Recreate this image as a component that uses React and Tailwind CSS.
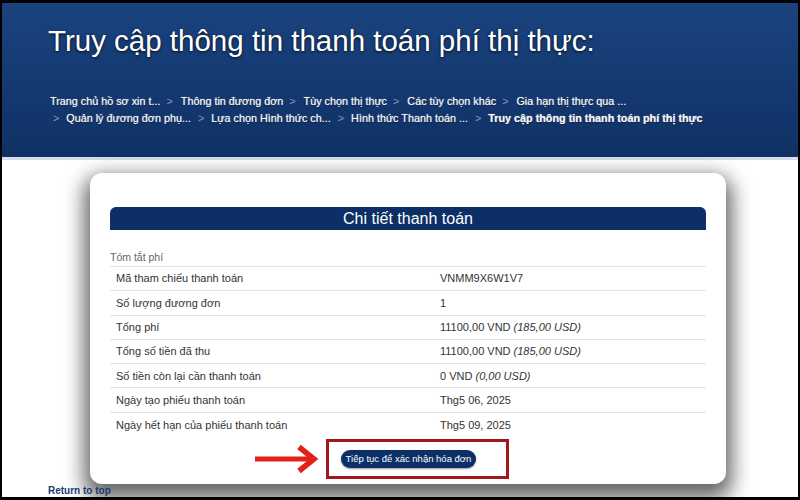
export default function App() {
  const crumbs1 = [
    "Trang chủ hồ sơ xin t...",
    "Thông tin đương đơn",
    "Tùy chọn thị thực",
    "Các tùy chọn khác",
    "Gia hạn thị thực qua ...",
  ];
  const crumbs2 = [
    "Quản lý đương đơn phụ...",
    "Lựa chọn Hình thức ch...",
    "Hình thức Thanh toán ...",
  ];

  const rows = [
    { label: "Mã tham chiếu thanh toán", value: "VNMM9X6W1V7" },
    { label: "Số lượng đương đơn", value: "1" },
    { label: "Tổng phí", value: "11100,00 VND", note: "(185,00 USD)" },
    { label: "Tổng số tiền đã thu", value: "11100,00 VND", note: "(185,00 USD)" },
    { label: "Số tiền còn lại cần thanh toán", value: "0 VND", note: "(0,00 USD)" },
    { label: "Ngày tạo phiếu thanh toán", value: "Thg5 06, 2025" },
    { label: "Ngày hết hạn của phiếu thanh toán", value: "Thg5 09, 2025" },
  ];

  return (
    <div
      className="w-[800px] h-[500px] bg-black pt-[3px] px-[2px] pb-[3px] overflow-hidden"
      style={{ fontFamily: '"Liberation Sans", Arial, sans-serif' }}
    >
      <div className="h-full bg-white overflow-hidden flex flex-col">
        {/* header */}
        <div className="h-[154px] shrink-0 bg-gradient-to-b from-[#1a437f] to-[#0f3165] pl-[46px] pt-[19px]">
          <h1 className="text-[29.5px] leading-[38px] text-white [text-shadow:0_1px_3px_rgba(0,0,0,0.8)]">
            Truy cập thông tin thanh toán phí thị thực:
          </h1>
          <div className="mt-[33px] text-[10.8px] leading-[17px] text-[#f2f5fa] [text-shadow:0_0_1px_rgba(255,255,255,0.7),0_1px_1px_rgba(0,0,0,0.6)]">
            <div className="flex items-center">
              {crumbs1.map((c, i) => (
                <span key={c} className="flex items-center">
                  {i > 0 && <span className="px-[6px] text-[#8598b8] [text-shadow:none]">&gt;</span>}
                  <span className="pl-[2px]">{c}</span>
                </span>
              ))}
            </div>
            <div className="flex items-center pl-[5px]">
              {crumbs2.map((c) => (
                <span key={c} className="flex items-center">
                  <span className="pr-[7px] text-[#8598b8] [text-shadow:none]">&gt;</span>
                  <span className="pr-[7px]">{c}</span>
                </span>
              ))}
              <span className="pr-[7px] text-[#8598b8] [text-shadow:none]">&gt;</span>
              <span className="font-bold">Truy cập thông tin thanh toán phí thị thực</span>
            </div>
          </div>
        </div>
        <div className="h-[3px] shrink-0 bg-[#d5dde8]" />

        {/* card */}
        <div className="ml-[88px] mt-[13px] w-[636px] h-[311px] shrink-0 bg-white rounded-[12px] shadow-[0_9px_20px_6px_rgba(0,0,0,0.6)] px-[20px] pt-[34px]">
          <div className="h-[23px] bg-[#0b2f66] rounded-t-[6px] flex items-center justify-center text-white text-[16px]">
            Chi tiết thanh toán
          </div>
          <div className="mt-[18px] text-[10.5px] text-[#666] h-[18px] leading-[18px]">Tóm tắt phí</div>
          <div className="border-t border-[#e4e4e4]">
            {rows.map((r, i) => (
              <div
                key={r.label}
                className={`flex items-center h-[24.3px] text-[11px] text-[#333] ${
                  i < rows.length - 1 ? "border-b border-[#e4e4e4]" : ""
                }`}
              >
                <div className="w-[330px] pl-[6px]">{r.label}</div>
                <div>
                  {r.value}
                  {r.note && <span className="italic"> {r.note}</span>}
                </div>
              </div>
            ))}
          </div>

          <div className="flex items-center mt-[2px] ml-[145px]">
            <svg width="66" height="30" viewBox="0 0 66 30" className="mr-[5px]">
              <line x1="0" y1="15" x2="58" y2="15" stroke="#e3201b" strokeWidth="5" />
              <polyline
                points="44,3 59,15 44,27"
                fill="none"
                stroke="#e3201b"
                strokeWidth="5.5"
                strokeLinejoin="miter"
              />
            </svg>
            <div className="w-[183px] h-[40px] border-[3px] border-[#a3161e] flex items-center pl-[12px]">
              <button className="h-[18px] w-[135px] rounded-full bg-[#0b2f66] text-white text-[9.5px] shadow-[0_1px_2px_rgba(0,0,0,0.4)]">
                Tiếp tục để xác nhận hóa đơn
              </button>
            </div>
          </div>
        </div>

        <div className="ml-[46px] mt-[1px] text-[10px] font-bold text-[#1b3a6b] leading-[11px]">
          Return to top
        </div>
      </div>
    </div>
  );
}
